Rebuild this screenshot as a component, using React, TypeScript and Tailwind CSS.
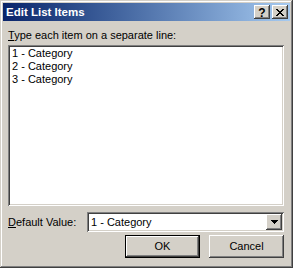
const raised =
  "shadow-[inset_-1px_-1px_#404040,inset_1px_1px_#ffffff,inset_-2px_-2px_#808080,inset_2px_2px_#d4d0c8]";
const sunken =
  "shadow-[inset_1px_1px_#808080,inset_-1px_-1px_#ffffff,inset_2px_2px_#404040,inset_-2px_-2px_#d4d0c8]";

function TitleButton({ children }: { children: React.ReactNode }) {
  return (
    <div className={`w-[16px] h-[14px] bg-[#d4d0c8] flex items-center justify-center ${raised}`}>
      {children}
    </div>
  );
}

export default function App() {
  const items = ["1 - Category", "2 - Category", "3 - Category"];

  return (
    <div
      className={`w-[293px] h-[268px] bg-[#d4d0c8] p-[3px] flex flex-col text-[11px] leading-[13px] text-black shadow-[inset_-1px_-1px_#404040,inset_1px_1px_#d4d0c8,inset_-2px_-2px_#808080,inset_2px_2px_#ffffff]`}
      style={{ fontFamily: '"Liberation Sans", Arial, sans-serif' }}
    >
      {/* Title bar */}
      <div className="h-[18px] flex items-center justify-between pl-[3px] pr-[2px] bg-gradient-to-r from-[#0a246a] to-[#a6caf0]">
        <span className="text-white font-bold text-[11.5px]">Edit List Items</span>
        <div className="flex gap-[2px]">
          <TitleButton>
            <span className="font-bold text-[12px] leading-none mt-[1px]">?</span>
          </TitleButton>
          <TitleButton>
            <svg width="8" height="7" viewBox="0 0 8 7" shapeRendering="crispEdges">
              <path
                d="M0 0h2v1h-2zM6 0h2v1h-2zM1 1h2v1h-2zM5 1h2v1h-2zM2 2h4v1h-4zM3 3h2v1h-2zM2 4h4v1h-4zM1 5h2v1h-2zM5 5h2v1h-2zM0 6h2v1h-2zM6 6h2v1h-2z"
                fill="#000"
              />
            </svg>
          </TitleButton>
        </div>
      </div>

      {/* Body */}
      <div className="flex flex-col pl-[5px] pr-[6px] pt-[8px]">
        <label>
          <span className="underline">T</span>ype each item on a separate line:
        </label>

        <div className={`mt-[3px] h-[161px] bg-white pl-[4px] pt-[2px] ${sunken}`}>
          {items.map((it) => (
            <div key={it}>{it}</div>
          ))}
        </div>

        <div className="mt-[6px] flex items-center justify-between">
          <span>
            <span className="underline">D</span>efault Value:
          </span>
          <div className={`w-[197px] h-[20px] bg-white flex items-center justify-between pl-[4px] pr-[2px] ${sunken}`}>
            <span>1 - Category</span>
            <div className={`w-[16px] h-[16px] bg-[#d4d0c8] flex items-center justify-center ${raised}`}>
              <svg width="7" height="4" viewBox="0 0 7 4" shapeRendering="crispEdges">
                <path d="M0 0h7v1h-7zM1 1h5v1h-5zM2 2h3v1h-3zM3 3h1v1h-1z" fill="#000" />
              </svg>
            </div>
          </div>
        </div>

        <div className="mt-[3px] flex justify-end gap-[9px]">
          <button className="w-[75px] h-[23px] bg-[#d4d0c8] border border-black flex items-center justify-center">
            <span className={`w-full h-full flex items-center justify-center ${raised}`}>OK</span>
          </button>
          <button className={`w-[75px] h-[23px] bg-[#d4d0c8] flex items-center justify-center ${raised}`}>
            Cancel
          </button>
        </div>
      </div>
    </div>
  );
}
